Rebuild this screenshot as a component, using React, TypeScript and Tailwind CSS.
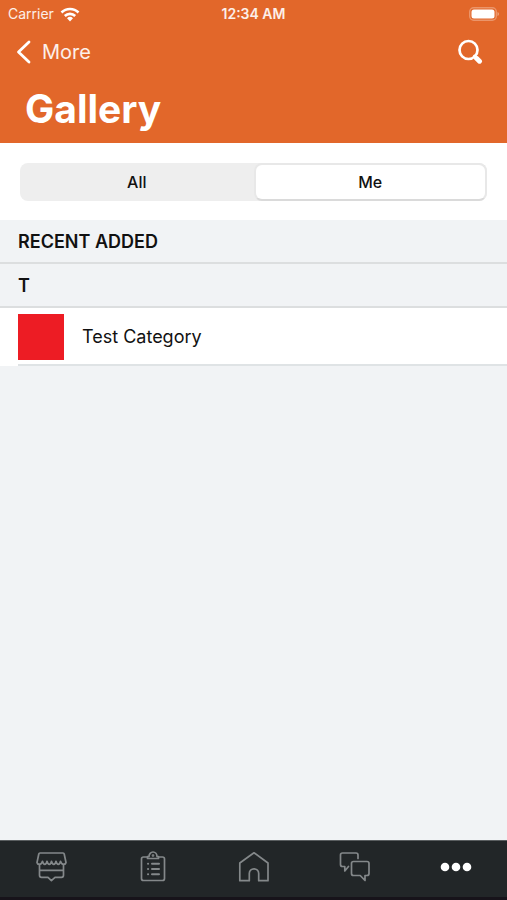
import * as React from "react";

type Filter = "all" | "me";

const filters: { id: Filter; label: string }[] = [
  { id: "all", label: "All" },
  { id: "me", label: "Me" },
];

const sections = [
  { title: "RECENT ADDED", items: [] },
  { title: "T", items: [{ id: "test", name: "Test Category" }] },
];

const TabIcon = ({ children }: { children: React.ReactNode }) => (
  <svg viewBox="0 0 32 32" className="size-8" fill="none" stroke="currentColor" strokeWidth="1.7" strokeLinejoin="round" strokeLinecap="round" aria-hidden="true">
    {children}
  </svg>
);

const tabs = [
  {
    label: "Shop",
    icon: (
      <TabIcon>
        <path d="M5 2h23q1 0 1.200 1L31 11.500q-.3 1.800-2.300 1.800-2.500 0-3.200-3-.7 3-2.200 3t-2.300-3q-.7 3-2.200 3t-2.300-3q-.7 3-2.200 3t-2.300-3q-.7 3-2.200 3t-2.300-3q-.7 3-3.200 3-2 0-2.300-1.800L3.800 3q.2-1 1.200-1z" />
        <path d="M4.500 13.500V24.300q0 2 2 2H13l3.400 3.400 3.600-3.400h6.500q2 0 2-2V13.500M4.500 19.300h24" />
      </TabIcon>
    ),
  },
  {
    label: "Tasks",
    icon: (
      <TabIcon>
        <path d="M11.500 6H7.500Q5.500 6 5.500 8v19.500q0 2 2 2h19q2 0 2-2V8q0-2-2-2h-4" />
        <path d="M11.500 7.500V5.500H13a4 4.500 0 0 1 8 0h1.500v2z" />
        <circle cx="17" cy="4.500" r=".5" />
        <path strokeWidth="2" d="M12 12.700h.1M12 18h.1M12 23.300h.1M16 12.700h7M16 18h7M16 23.300h7" />
      </TabIcon>
    ),
  },
  {
    label: "Home",
    icon: (
      <TabIcon>
        <path d="M17 1.800 31 12v17.700h-9.300V22.500a4.700 4.700 0 0 0-9.400 0v7.200H2.800V12z" />
      </TabIcon>
    ),
  },
  {
    label: "Chat",
    icon: (
      <TabIcon>
        <path d="M19 7.500V4q0-2-2-2H3.500q-2 0-2 2v9.500q0 2 2 2h2.300V20l3.700-4.500" />
        <path d="M14.500 10.500h13.500q2 0 2 2v10q0 2-2 2h-2v5l-4.800-5h-6.700q-2 0-2-2v-10q0-2 2-2z" />
      </TabIcon>
    ),
  },
  {
    label: "More",
    icon: (
      <svg viewBox="0 0 32 32" className="size-8 text-white" fill="currentColor" aria-hidden="true">
        <circle cx="5" cy="16" r="4.300" />
        <circle cx="16" cy="16" r="4.300" />
        <circle cx="27" cy="16" r="4.300" />
      </svg>
    ),
  },
];

const StatusBar = () => (
  <div className="grid h-7 grid-cols-3 items-center px-2 text-sm text-white/90">
    <div className="flex items-center gap-1.5">
      <span>Carrier</span>
      <svg viewBox="0 0 20 15" className="h-[15px] w-5" fill="none" stroke="#fff" strokeWidth="2.600" aria-hidden="true">
        <path d="M1.500 5.500a12 12 0 0 1 17 0M4.800 9a7.400 7.400 0 0 1 10.400 0" />
        <path d="M10 14.500 7 11.300a4.300 4.300 0 0 1 6 0z" fill="#fff" stroke="none" />
      </svg>
    </div>
    <span className="text-center font-semibold">12:34 AM</span>
    <svg viewBox="0 0 30 14" className="h-3.5 w-[30px] justify-self-end" aria-hidden="true">
      <rect x=".7" y=".7" width="26.600" height="12.600" rx="4" fill="none" stroke="#fff" strokeOpacity=".3" strokeWidth="1.400" />
      <rect x="2.500" y="2.500" width="23" height="9" rx="2.500" fill="#fff" />
      <path d="M28.500 5v4q1.500-.5 1.500-2t-1.500-2z" fill="#fff" fillOpacity=".4" />
    </svg>
  </div>
);

const Header = () => (
  <header className="bg-[#e2672a] text-white">
    <StatusBar />
    <div className="flex h-12 items-center justify-between pr-6 pl-4">
      <button type="button" className="flex items-center gap-2.5 text-xl text-white/90">
        <svg viewBox="0 0 16 24" className="h-6 w-4" fill="none" stroke="#fff" strokeWidth="2.800" strokeLinecap="round" strokeLinejoin="round" aria-hidden="true">
          <path d="M13 2 2.500 12 13 22" />
        </svg>
        More
      </button>
      <button type="button" aria-label="Search">
        <svg viewBox="0 0 26 26" className="size-[26px]" fill="none" stroke="#fff" strokeLinecap="round" aria-hidden="true">
          <circle cx="11.500" cy="11" r="9" strokeWidth="2.700" />
          <path d="m17.500 17 3 3" strokeWidth="3" />
          <path d="m19.500 19.300 3 2.900" strokeWidth="5" />
        </svg>
      </button>
    </div>
    <h1 className="px-[25px] pt-[9px] pb-2.5 text-[39px] leading-12 font-bold">Gallery</h1>
  </header>
);

export default function App() {
  const [filter, setFilter] = React.useState<Filter>("me");
  const [activeTab, setActiveTab] = React.useState("More");

  return (
    <div className="flex min-h-screen flex-col bg-[#f1f3f5] font-['Inter',sans-serif] text-[#111]">
      <Header />

      <main className="flex-1">
        <div className="bg-white px-5 pt-5 pb-[19px]">
          <div className="grid h-[38px] grid-cols-2 rounded-lg bg-[#eee]">
            {filters.map((f) => (
              <button
                key={f.id}
                type="button"
                aria-pressed={filter === f.id}
                onClick={() => setFilter(f.id)}
                className={`rounded-lg text-base font-medium ${filter === f.id ? "border-2 border-[#e8e8e8] border-b-[#dadada] bg-white" : ""}`}
              >
                {f.label}
              </button>
            ))}
          </div>
        </div>

        {sections.map((section) => (
          <section key={section.title}>
            <h2 className="flex h-11 items-center border-b-2 border-[#dcdedf] px-[18px] pt-0.5 text-lg font-semibold">{section.title}</h2>
            {section.items.map((item) => (
              <a key={item.id} href="#test" className="block bg-white pl-[18px]">
                <div className="flex items-center gap-[18px] border-b-2 border-[#dfe3e5] pt-1.5 pb-1">
                  <span className="size-[46px] bg-[#ed1c24]" />
                  <span className="text-lg">{item.name}</span>
                </div>
              </a>
            ))}
          </section>
        ))}
      </main>

      <nav className="grid h-[60px] grid-cols-5 border-t border-b-3 border-t-[#5a5e60] border-b-[#17131a] bg-[#222628]">
        {tabs.map((tab) => (
          <button
            key={tab.label}
            type="button"
            aria-label={tab.label}
            aria-current={activeTab === tab.label ? "page" : undefined}
            onClick={() => setActiveTab(tab.label)}
            className="flex items-center justify-center pb-1 text-[#84888a]"
          >
            {tab.icon}
          </button>
        ))}
      </nav>
    </div>
  );
}
